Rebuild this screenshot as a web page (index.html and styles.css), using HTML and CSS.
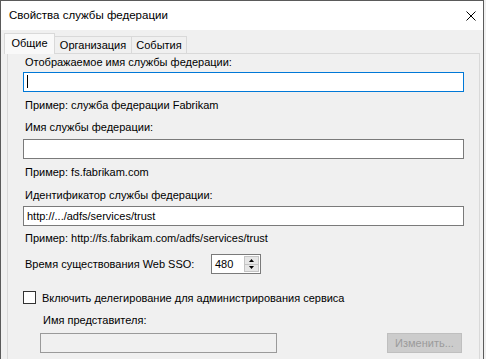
FILE: index.html
```html
<!DOCTYPE html>
<html lang="ru">
<head>
  <meta charset="UTF-8" />
  <title>Свойства службы федерации</title>
  <link rel="stylesheet" href="styles.css">
</head>
<body>
  <div class="window">
    <div class="titlebar">
      <span class="title">Свойства службы федерации</span>
      <svg class="close" width="10" height="10" viewBox="0 0 10 10">
        <path d="M0.5 0.5 L9.5 9.5 M9.5 0.5 L0.5 9.5" stroke="#000" stroke-width="1" fill="none" />
      </svg>
    </div>
    <div class="client">
      <div class="tabs">
        <div class="tab active">Общие</div>
        <div class="tab org">Организация</div>
        <div class="tab events">События</div>
      </div>
      <div class="panel">
        <div class="label l1">Отображаемое имя службы федерации:</div>
        <div class="input focused i1"><span class="caret"></span></div>
        <div class="hint h1">Пример: служба федерации Fabrikam</div>

        <div class="label l2">Имя службы федерации:</div>
        <div class="input i2"></div>
        <div class="hint h2">Пример: fs.fabrikam.com</div>

        <div class="label l3">Идентификатор службы федерации:</div>
        <div class="input i3">http://.../adfs/services/trust</div>
        <div class="hint h3">Пример: http://fs.fabrikam.com/adfs/services/trust</div>

        <div class="sso-row">
          <span class="sso-label">Время существования Web SSO:</span>
          <div class="spinner">
            <span class="spin-value">480</span>
            <div class="spin-buttons">
              <div class="spin-btn">
                <svg width="5" height="3" viewBox="0 0 5 3"><path d="M2.5 0 L5 3 L0 3 Z" fill="#000" /></svg>
              </div>
              <div class="spin-btn">
                <svg width="5" height="3" viewBox="0 0 5 3"><path d="M0 0 L5 0 L2.5 3 Z" fill="#000" /></svg>
              </div>
            </div>
          </div>
        </div>

        <div class="check-row">
          <span class="checkbox"></span>
          <span>Включить делегирование для администрирования сервиса</span>
        </div>

        <div class="label indent">Имя представителя:</div>
        <div class="delegate-row">
          <div class="input disabled"></div>
          <div class="button disabled">Изменить...</div>
        </div>
      </div>
    </div>
  </div>
</body>
</html>
```

FILE: styles.css
```css
body {
  margin: 0;
  background: #f0f0f0;
  font-family: "Liberation Sans", Arial, sans-serif;
  font-size: 11px;
  color: #000;
}
.window {
  width: 484px;
  height: 359px;
  border: 1px solid #5a5a5a;
  border-bottom: none;
  box-sizing: border-box;
  display: flex;
  flex-direction: column;
  overflow: hidden;
}
.titlebar {
  height: 29px;
  background: #fff;
  display: flex;
  align-items: center;
  justify-content: space-between;
  padding: 0 7px 0 8px;
  flex-shrink: 0;
}
.title {
  font-size: 11.5px;
  line-height: 15px;
  margin-top: -1px;
}

/* tab strip */
.client {
  flex: 1;
  background: #f0f0f0;
  padding: 3px 3px 0 3px;
}
.tabs {
  display: flex;
  align-items: flex-end;
  height: 20px;
  position: relative;
  z-index: 1;
}
.tab {
  height: 17px;
  box-sizing: border-box;
  line-height: 16px;
  border: 1px solid #d9d9d9;
  border-bottom: none;
  background: #f0f0f0;
  text-align: center;
  margin-left: -1px;
}
.tab.active {
  width: 51px;
  height: 21px;
  line-height: 19px;
  margin-left: 0;
  margin-bottom: -1px;
  background: #f9f9f9;
  position: relative;
  z-index: 2;
}
.tab.org {
  width: 78px;
}
.tab.events {
  width: 56px;
}
.panel {
  border: 1px solid #d9d9d9;
  margin-left: 3px;
  height: 330px;
  padding: 0 15px;
}

/* fields */
.label {
  line-height: 15px;
  padding-left: 2px;
}
.l1 { margin-top: 1px; }
.l2 { margin-top: 7px; }
.l3 { margin-top: 8px; }
.input {
  height: 20px;
  box-sizing: border-box;
  border: 1px solid #7a7a7a;
  background: #fff;
  padding: 0 3px;
  line-height: 18px;
  white-space: nowrap;
}
.i1 { margin-top: 2px; }
.i2 { margin-top: 4px; }
.i3 { margin-top: 3px; }
.input.focused {
  border-color: #0078d7;
}
.caret {
  display: inline-block;
  width: 1px;
  height: 13px;
  background: #000;
  vertical-align: -2px;
}
.hint {
  line-height: 15px;
  padding-left: 2px;
}
.h1, .h2 { margin-top: 6px; }
.h3 { margin-top: 5px; }

.sso-row {
  display: flex;
  align-items: center;
  margin-top: 8px;
}
.sso-label {
  width: 186px;
  padding-left: 2px;
}
.spinner {
  width: 50px;
  height: 20px;
  box-sizing: border-box;
  border: 1px solid #7a7a7a;
  background: #fff;
  display: flex;
  justify-content: space-between;
  padding: 1px;
}
.spin-value {
  line-height: 16px;
  padding-left: 2px;
}
.spin-buttons {
  width: 15px;
  display: flex;
  flex-direction: column;
}
.spin-btn {
  flex: 1;
  display: flex;
  align-items: center;
  justify-content: center;
  background: #e6e6e6;
  border: 1px solid #c4c4c4;
}
.spin-btn + .spin-btn {
  border-top: none;
}
.check-row {
  display: flex;
  align-items: center;
  height: 15px;
  margin-top: 16px;
}
.checkbox {
  width: 13px;
  height: 13px;
  box-sizing: border-box;
  border: 1px solid #333;
  background: #fff;
  margin-right: 6px;
}
.label.indent {
  padding-left: 20px;
  margin-top: 8px;
}
.delegate-row {
  display: flex;
  justify-content: space-between;
  align-items: center;
  margin-top: 5px;
  padding-left: 17px;
}
.input.disabled {
  width: 237px;
  background: #f0f0f0;
  border-color: #9a9a9a;
}
.button.disabled {
  width: 75px;
  height: 20px;
  box-sizing: border-box;
  border: 1px solid #bfbfbf;
  background: #cccccc;
  color: #9b9b9b;
  text-align: center;
  line-height: 18px;
  margin-right: 2px;
}
```
